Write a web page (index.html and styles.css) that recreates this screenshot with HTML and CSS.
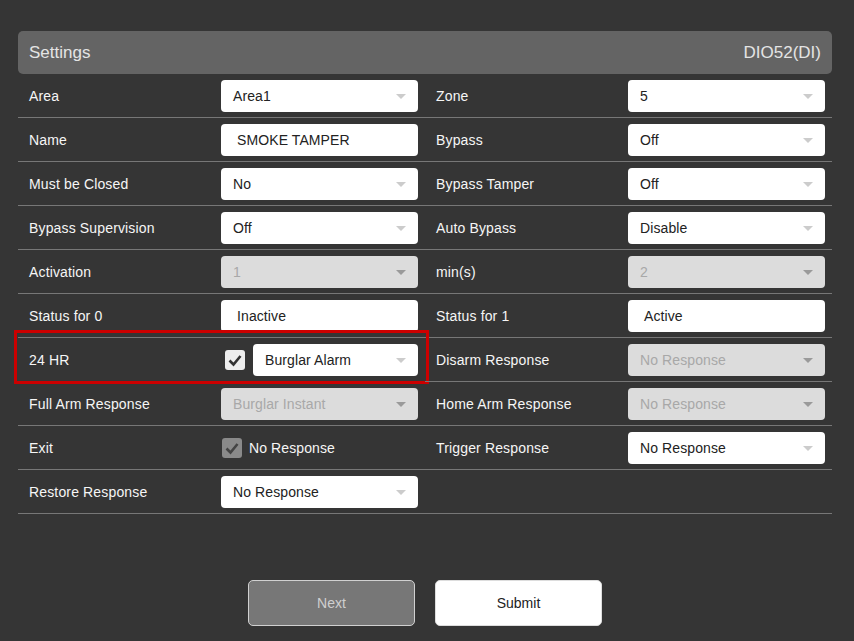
FILE: index.html
```html
<!DOCTYPE html>
<html>
<head>
<meta charset="utf-8">
<link rel="stylesheet" href="styles.css">
</head>
<body>
<div class="page">
  <div class="header">
    <span>Settings</span>
    <span>DIO52(DI)</span>
  </div>
  <div class="grid">
    <div class="cell"><span class="label">Area</span><div class="select">Area1<i class="arrow"></i></div></div>
    <div class="cell"><span class="label">Zone</span><div class="select">5<i class="arrow"></i></div></div>

    <div class="cell"><span class="label">Name</span><div class="input">SMOKE TAMPER</div></div>
    <div class="cell"><span class="label">Bypass</span><div class="select">Off<i class="arrow"></i></div></div>

    <div class="cell"><span class="label">Must be Closed</span><div class="select">No<i class="arrow"></i></div></div>
    <div class="cell"><span class="label">Bypass Tamper</span><div class="select">Off<i class="arrow"></i></div></div>

    <div class="cell"><span class="label">Bypass Supervision</span><div class="select">Off<i class="arrow"></i></div></div>
    <div class="cell"><span class="label">Auto Bypass</span><div class="select">Disable<i class="arrow"></i></div></div>

    <div class="cell"><span class="label">Activation</span><div class="select disabled">1<i class="arrow"></i></div></div>
    <div class="cell"><span class="label">min(s)</span><div class="select disabled">2<i class="arrow"></i></div></div>

    <div class="cell"><span class="label">Status for 0</span><div class="input">Inactive</div></div>
    <div class="cell"><span class="label">Status for 1</span><div class="input">Active</div></div>

    <div class="cell highlight"><span class="label">24 HR</span>
      <div class="combo">
        <span class="check"><svg viewBox="0 0 20 20" width="20" height="20"><path d="M4.5 10.5 L8.5 14.5 L15.5 6" fill="none" stroke="#333" stroke-width="2.6"/></svg></span>
        <div class="select short">Burglar Alarm<i class="arrow"></i></div>
      </div>
    </div>
    <div class="cell"><span class="label">Disarm Response</span><div class="select disabled">No Response<i class="arrow"></i></div></div>

    <div class="cell"><span class="label">Full Arm Response</span><div class="select disabled">Burglar Instant<i class="arrow"></i></div></div>
    <div class="cell"><span class="label">Home Arm Response</span><div class="select disabled">No Response<i class="arrow"></i></div></div>

    <div class="cell"><span class="label">Exit</span>
      <div class="combo exit">
        <span class="check dis"><svg viewBox="0 0 20 20" width="20" height="20"><path d="M4.5 10.5 L8.5 14.5 L15.5 6" fill="none" stroke="#444" stroke-width="2.6"/></svg></span>
        <span class="plain">No Response</span>
      </div>
    </div>
    <div class="cell"><span class="label">Trigger Response</span><div class="select">No Response<i class="arrow"></i></div></div>

    <div class="cell"><span class="label">Restore Response</span><div class="select">No Response<i class="arrow"></i></div></div>
    <div class="cell"></div>
  </div>
  <div class="buttons">
    <button class="btn next">Next</button>
    <button class="btn submit">Submit</button>
  </div>
</div>
</body>
</html>
```
FILE: styles.css
```css
html, body {
  margin: 0;
  padding: 0;
  background: #353535;
  font-family: "Liberation Sans", Arial, sans-serif;
}
.page {
  width: 814px;
  padding: 31px 0 0 18px;
}
.header {
  height: 43px;
  background: #646464;
  border-radius: 5px;
  display: flex;
  align-items: center;
  justify-content: space-between;
  padding: 0 11px;
  font-size: 17px;
  color: #e4e4e4;
}
.grid {
  display: grid;
  grid-template-columns: 407px 407px;
}
.cell {
  border-bottom: 1px solid #777;
  display: flex;
  align-items: center;
  padding: 1px 7px 0 11px;
  box-sizing: border-box;
  height: 44px;
  position: relative;
}
.label {
  width: 192px;
  font-size: 14px;
  letter-spacing: 0.15px;
  color: #f6f6f6;
}
.select, .input {
  width: 197px;
  height: 32px;
  box-sizing: border-box;
  background: #fff;
  border-radius: 4px;
  font-size: 14px;
  letter-spacing: 0.1px;
  color: #222;
  display: flex;
  align-items: center;
  padding-left: 12px;
  position: relative;
}
.input {
  padding-left: 16px;
}
.select.disabled {
  background: #dcdcdc;
  color: #a8a8a8;
}
.arrow {
  position: absolute;
  right: 12px;
  top: 14px;
  width: 0;
  height: 0;
  border-left: 5px solid transparent;
  border-right: 5px solid transparent;
  border-top: 5px solid #ccc;
}
.select.disabled .arrow {
  border-top-color: #9a9a9a;
}
.combo {
  width: 197px;
  display: flex;
  align-items: center;
}
.check {
  width: 20px;
  height: 20px;
  border-radius: 3px;
  background: #eee;
  display: block;
  margin-left: 4px;
}
.check svg { display: block; }
.check.dis {
  background: #8a8a8a;
  margin-left: 1px;
}
.select.short {
  width: 165px;
  margin-left: 8px;
}
.plain {
  font-size: 14px;
  letter-spacing: 0.1px;
  color: #f6f6f6;
  margin-left: 7px;
}
.highlight::after {
  content: "";
  position: absolute;
  left: -4px;
  top: -8px;
  width: 409px;
  height: 48px;
  border: 3px solid #cc0000;
}
.buttons {
  display: flex;
  justify-content: center;
  gap: 20px;
  margin-top: 66px;
}
.btn {
  width: 167px;
  height: 46px;
  border-radius: 5px;
  font-family: "Liberation Sans", Arial, sans-serif;
  font-size: 14px;
}
.next {
  background: #777;
  border: 1px solid #d0d0d0;
  color: #cfcfcf;
}
.submit {
  background: #fff;
  border: 1px solid #ddd;
  color: #222;
}
```
